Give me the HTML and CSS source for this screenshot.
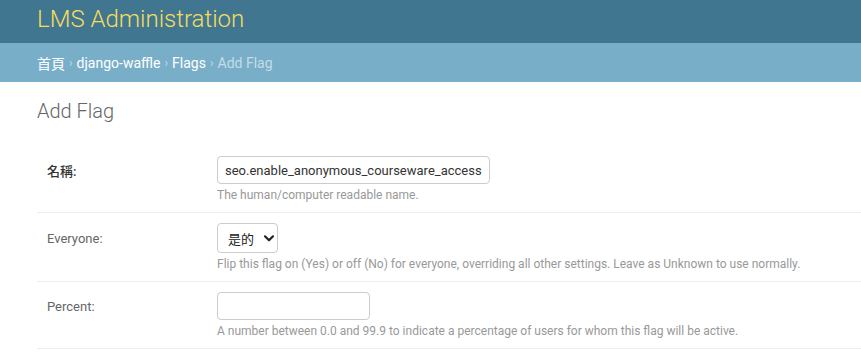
FILE: index.html
```html
<!DOCTYPE html>
<html lang="zh-Hant">
<head>
  <meta charset="UTF-8">
  <title>Add Flag | LMS Administration</title>
  <link rel="stylesheet" href="styles.css">
</head>
<body>

  <div id="header">
    <h1 class="branding">LMS Administration</h1>
  </div>

  <div class="breadcrumbs">
    <a href="#">首頁</a>
    <span class="sep">›</span>
    <a href="#">django-waffle</a>
    <span class="sep">›</span>
    <a href="#">Flags</a>
    <span class="sep">›</span>
    <span class="current">Add Flag</span>
  </div>

  <div id="content">
    <h1 class="page-title">Add Flag</h1>

    <form class="flag-form">
      <fieldset class="module">
        <div class="form-row">
          <label class="required" for="id_name">名稱:</label>
          <input class="vTextField" type="text" id="id_name" value="seo.enable_anonymous_courseware_access">
          <div class="help">The human/computer readable name.</div>
        </div>

        <div class="form-row">
          <label for="id_everyone">Everyone:</label>
          <div class="select-wrap">
            <select id="id_everyone">
              <option>是的</option>
            </select>
            <svg class="chevron" width="10" height="7" viewBox="0 0 10 7">
              <path d="M1 1.3 L5 5.3 L9 1.3" fill="none" stroke="#222" stroke-width="2.2" stroke-linecap="round" stroke-linejoin="round"/>
            </svg>
          </div>
          <div class="help">Flip this flag on (Yes) or off (No) for everyone, overriding all other settings. Leave as Unknown to use normally.</div>
        </div>

        <div class="form-row">
          <label for="id_percent">Percent:</label>
          <input class="vNumber" type="text" id="id_percent" value="">
          <div class="help">A number between 0.0 and 99.9 to indicate a percentage of users for whom this flag will be active.</div>
        </div>
      </fieldset>
    </form>
  </div>

</body>
</html>
```

FILE: styles.css
```css
/* Grundlayout */
html, body {
  margin: 0;
  padding: 0;
  background: #fff;
}
body {
  font-family: Roboto, "Noto Sans CJK TC", sans-serif;
  font-size: 14px;
  color: #333;
  overflow: hidden;
}

/* Kopfzeile */
#header {
  height: 43px;
  display: flex;
  align-items: center;
  padding: 0 37px;
  background: #417690;
}
#header .branding {
  margin: 0;
  font-size: 24px;
  font-weight: 300;
  line-height: 28px;
  color: #f5dd5d;
  margin-top: -5px;
}

/* Brotkrumen */
.breadcrumbs {
  height: 39px;
  display: flex;
  align-items: center;
  gap: 4px;
  padding: 0 37px;
  background: #79aec8;
  font-size: 14px;
  color: #c4dce8;
}
.breadcrumbs a {
  color: #fff;
  text-decoration: none;
}
.breadcrumbs .sep {
  font-size: 12px;
}

/* Inhalt */
#content {
  padding: 17px 0 0 37px;
}
.page-title {
  margin: 0 0 23px;
  font-size: 20px;
  font-weight: 300;
  line-height: 24px;
  color: #666;
}

.module {
  margin: 0;
  padding: 0;
  border: 0;
}

.form-row {
  display: grid;
  grid-template-columns: 170px 1fr;
  padding: 10px 0 10px 10px;
  border-bottom: 1px solid #eee;
  font-size: 13px;
}
.form-row label {
  grid-column: 1;
  grid-row: 1;
  align-self: center;
  color: #666;
}
.form-row label.required {
  color: #333;
  font-weight: 500;
}
.form-row .help {
  grid-column: 2;
  grid-row: 2;
  padding-top: 4px;
  font-size: 12px;
  line-height: 14px;
  color: #999;
}

input[type=text] {
  grid-column: 2;
  grid-row: 1;
  box-sizing: border-box;
  height: 28px;
  padding: 0 7px;
  border: 1px solid #ccc;
  border-radius: 4px;
  font-family: Roboto, sans-serif;
  font-size: 13px;
  color: #333;
  outline: none;
}
.vTextField {
  width: 273px;
}
.vNumber {
  width: 153px;
}

/* Auswahlfeld */
.select-wrap {
  grid-column: 2;
  grid-row: 1;
  justify-self: start;
  display: flex;
  align-items: center;
}
.select-wrap select {
  appearance: none;
  -webkit-appearance: none;
  box-sizing: border-box;
  width: 61px;
  height: 30px;
  padding: 0 0 0 10px;
  border: 1px solid #ccc;
  border-radius: 4px;
  background: #fff;
  font-family: "Noto Sans CJK TC", sans-serif;
  font-size: 13px;
  color: #222;
}
.select-wrap .chevron {
  margin-left: -14px;
  pointer-events: none;
}
```
